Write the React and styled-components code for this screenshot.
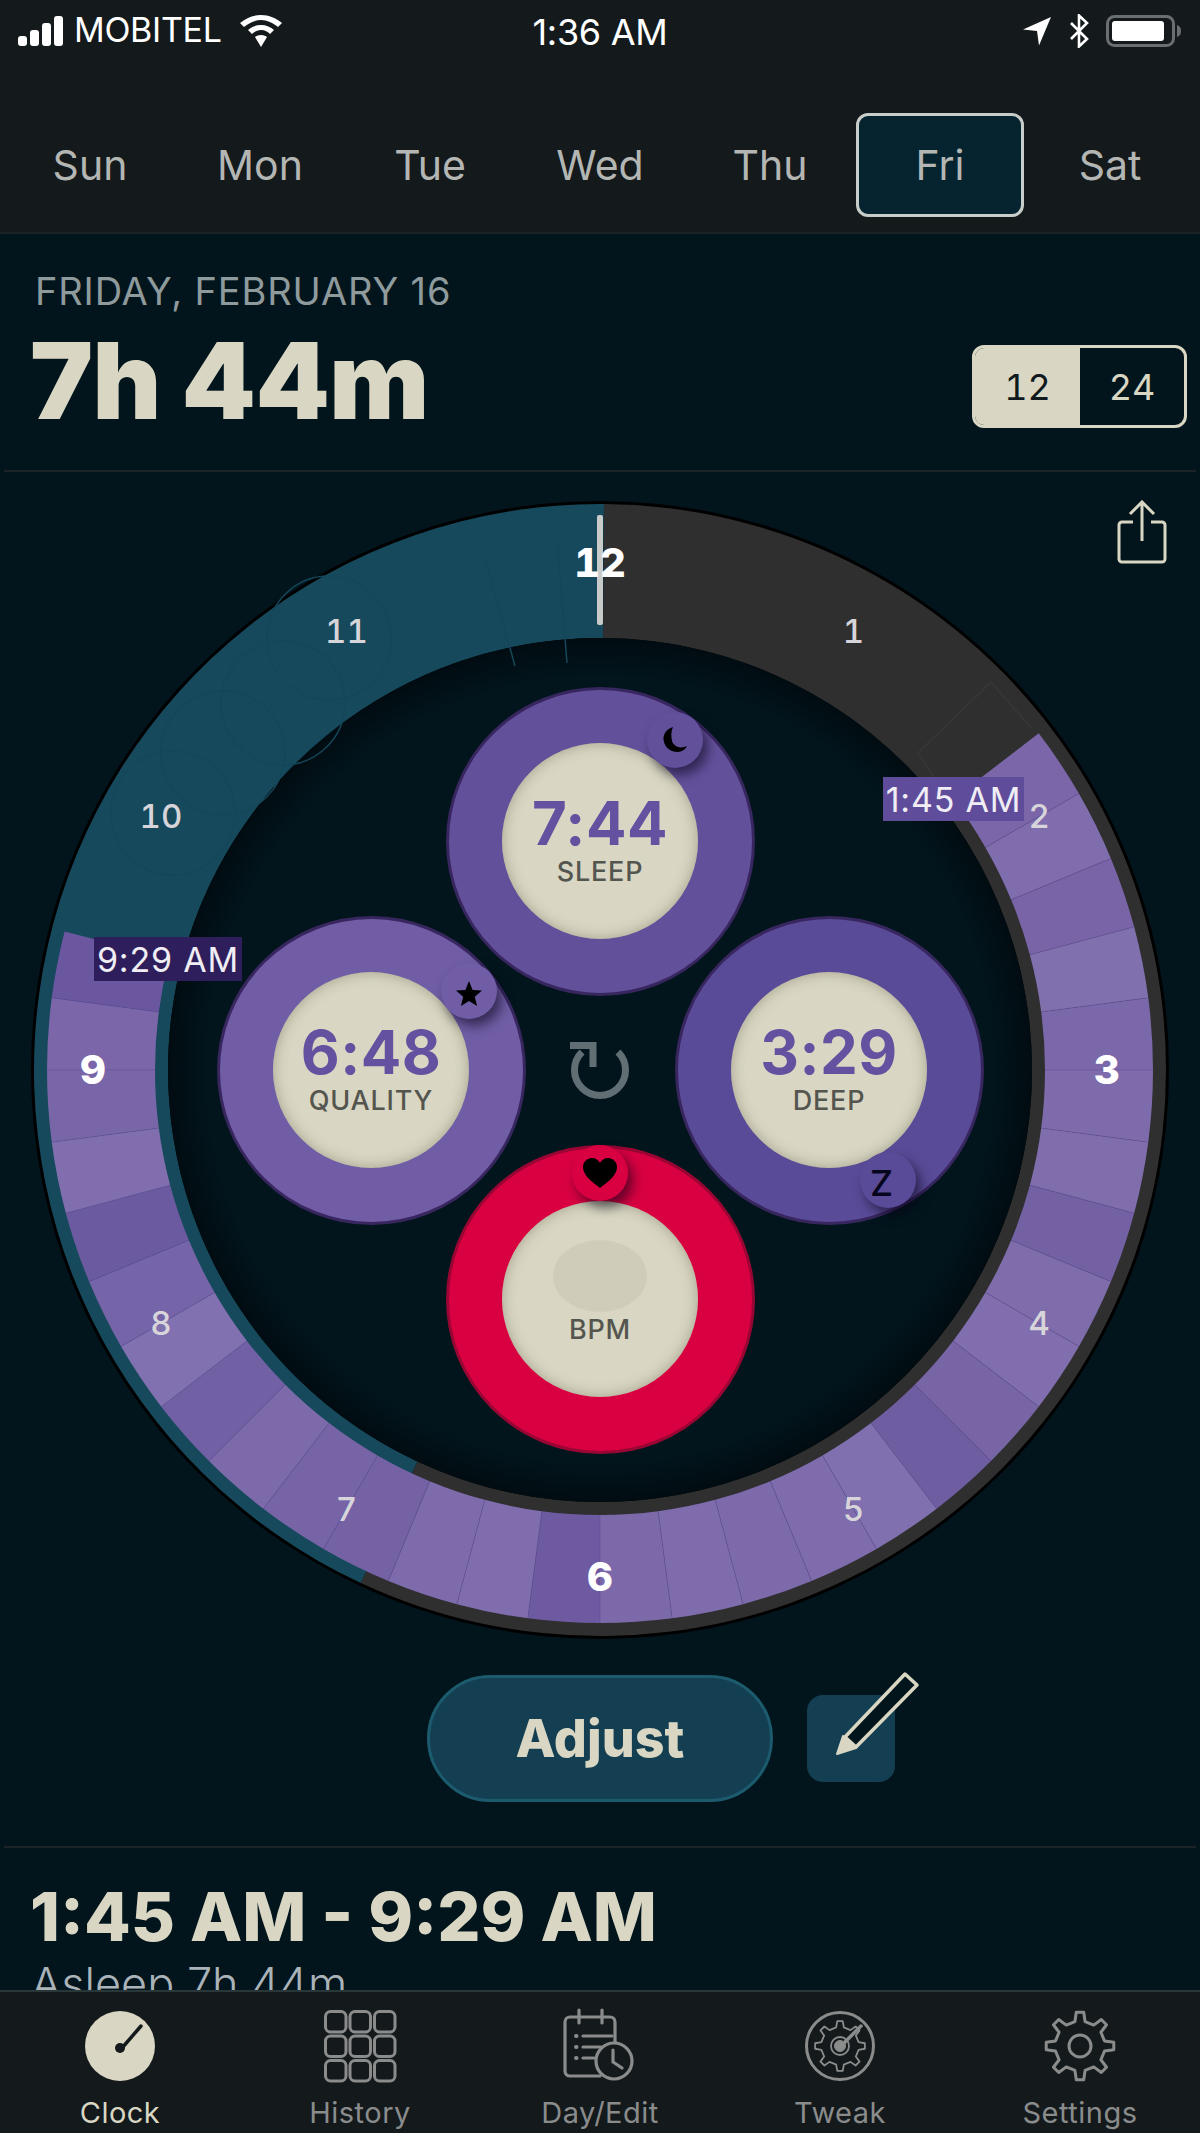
import React from 'react';
import styled, { createGlobalStyle } from 'styled-components';

const Global = createGlobalStyle`
  html, body { margin: 0; padding: 0; background: #02151d; }
  * { box-sizing: border-box; }
  #root { width: 1200px; height: 2133px; overflow: hidden; }
`;

const Page = styled.div`
  width: 1200px; height: 2133px; display: flex; flex-direction: column;
  background: #02151d; color: #d9d7c3; font-family: Inter, "Liberation Sans", sans-serif; overflow: hidden;
`;
const Header = styled.header`
  height: 234px; flex: none; background: #14191c; border-bottom: 2px solid #1b2224; display: flex; flex-direction: column;
`;
const StatusBar = styled.div`
  height: 66px; flex: none; padding: 0 18px; display: grid; grid-template-columns: 1fr auto 1fr; align-items: center; color: #fff;
`;
const StatusSide = styled.div`
  display: flex; align-items: center; gap: ${p => p.$gap}px; justify-content: ${p => p.$end ? 'flex-end' : 'flex-start'};
  margin-top: -4px;
`;
const StatusText = styled.span`
  font-size: ${p => p.$size}px; font-weight: 400; letter-spacing: -0.3px; line-height: 36px; margin-top: -2px;
`;
const WifiSlot = styled.span`display: flex; margin-left: 8px;`;
const DayNav = styled.nav`
  flex: 1; display: grid; grid-template-columns: repeat(7, 170px); justify-content: center; align-items: start; padding-top: 47px;
`;
const Day = styled.div`
  height: 104px; width: ${p => p.$active ? '168px' : 'auto'}; justify-self: center; display: flex; align-items: center; justify-content: center;
  font-size: 41px; font-weight: 400; color: #b3b6b3; border-radius: 12px;
  border: ${p => p.$active ? '3px solid #c9cdc9' : '3px solid transparent'};
  background: ${p => p.$active ? '#05242f' : 'transparent'};
`;
const Summary = styled.section`
  height: 238px; flex: none; padding: 36px 13px 0 30px; position: relative; display: flex; justify-content: space-between; align-items: flex-start;
  &::after { content: ''; position: absolute; left: 4px; right: 4px; bottom: 0; height: 2px; background: #1d2427; }
`;
const SummaryText = styled.div`display: flex; flex-direction: column;`;
const DateLine = styled.div`
  font-size: 38px; line-height: 42px; font-weight: 400; color: #8f9a9c; padding-left: 5px; letter-spacing: .85px; white-space: nowrap;
`;
const BigTotal = styled.div`
  font-size: 106px; line-height: 110px; font-weight: 900; letter-spacing: -.5px; margin-top: 14px; color: #d9d7c3; white-space: nowrap;
`;
const Toggle = styled.div`
  width: 215px; height: 83px; margin-top: 75px; border: 3px solid #d9d7c3; border-radius: 12px; display: grid; grid-template-columns: 105px 1fr; overflow: hidden;
`;
const ToggleItem = styled.div`
  display: flex; align-items: center; justify-content: center; font-size: 36px; font-weight: 400; font-feature-settings: 'tnum';
  background: ${p => p.$on ? '#d9d7c3' : 'transparent'}; color: ${p => p.$on ? '#10191c' : '#d9d7c3'};
`;
const ClockSection = styled.section`
  height: 1376px; flex: none; position: relative; display: flex; flex-direction: column; align-items: center; padding-top: 31px;
  &::after { content: ''; position: absolute; left: 4px; right: 4px; bottom: 0; height: 2px; background: #1d2427; }
`;
const ShareWrap = styled.div`position: absolute; top: 28px; right: 33px; width: 50px; height: 64px;`;
const Dial = styled.div`position: relative; width: 1134px; height: 1134px; flex: none;`;
const DialArt = styled.svg`display: block; width: 100%; height: 100%; overflow: visible;`;
const TimeTag = styled.div`
  position: absolute; left: ${p => p.$left}px; top: ${p => p.$top}px; width: ${p => p.$w}px; height: 44px;
  background: ${p => p.$bg}; color: #f0eef4; font-size: 34px; letter-spacing: .8px; display: flex; align-items: center; justify-content: center; white-space: nowrap;
`;
const DiscLayer = styled.div`
  position: absolute; inset: 0; display: grid; grid-template-columns: repeat(3, 229px); grid-template-rows: repeat(3, 229px);
  justify-content: center; align-content: center;
`;
const Disc = styled.div`
  grid-column: ${p => p.$col}; grid-row: ${p => p.$row}; place-self: center; width: 309px; height: 309px; flex: none; border-radius: 50%;
  position: relative; display: flex; align-items: center; justify-content: center;
  background: ${p => p.$color}; border: 3px solid ${p => p.$rim};
`;
const Face = styled.div`
  width: 196px; height: 196px; border-radius: 50%; background: #d9d7c3; display: flex; flex-direction: column; align-items: center;
  justify-content: ${p => p.$top ? 'flex-start' : 'center'}; padding-top: ${p => p.$top ? '39px' : '0'}; gap: ${p => p.$top ? '3px' : '6px'};
  box-shadow: inset 0 0 14px rgba(95, 92, 70, .45);
`;
const FaceTime = styled.div`
  font-size: 60px; line-height: 56px; font-weight: 700; color: #6452a0; letter-spacing: .5px;
`;
const FaceLabel = styled.div`
  font-size: 27px; line-height: 30px; font-weight: 500; color: #55554f; letter-spacing: .8px;
`;
const Blob = styled.div`width: 94px; height: 72px; border-radius: 50%; background: #cfcdba;`;
const Badge = styled.div`
  position: absolute; width: 56px; height: 56px; border-radius: 50%; background: ${p => p.$color};
  left: calc(50% + ${p => p.$dx}px - 28px); top: calc(50% + ${p => p.$dy}px - 28px);
  box-shadow: 5px 7px 12px rgba(5, 0, 20, .55); display: flex; align-items: center; justify-content: center; color: #05051c;
  font-size: 36px; font-weight: 500;
`;
const ZMark = styled.span`padding: 6px 13px 0 0;`;
const Centre = styled.div`grid-column: 2; grid-row: 2; place-self: center; width: 120px; height: 120px;`;
const Actions = styled.div`
  margin-top: 38px; margin-left: 122px; display: flex; align-items: center; gap: 34px; position: relative;
`;
const AdjustButton = styled.button`
  width: 346px; height: 127px; border-radius: 64px; background: #143f52; border: 3px solid #1c5a6e; color: #d9d7c3;
  font: 800 52px Inter, "Liberation Sans", sans-serif; display: flex; align-items: center; justify-content: center; padding: 0;
`;
const EditButton = styled.div`
  width: 88px; height: 87px; border-radius: 16px; background: #143f52; position: relative;
`;
const PencilWrap = styled.svg`position: absolute; left: -17px; top: -35px; width: 140px; height: 130px; overflow: visible;`;
const RangeSection = styled.section`
  flex: 1; min-height: 0; overflow: hidden; padding: 28px 30px 0;
`;
const RangeTitle = styled.div`
  font-size: 68px; line-height: 80px; font-weight: 800; letter-spacing: 0; color: #d9d7c3; white-space: nowrap;
`;
const RangeSub = styled.div`
  font-size: 45px; line-height: 50px; font-weight: 300; color: #aab3b8; padding-left: 1px; margin-top: 3px; white-space: nowrap;
`;
const TabBar = styled.nav`
  height: 143px; flex: none; background: #14191c; border-top: 2px solid #2a3739; display: grid; grid-template-columns: repeat(5, 240px);
`;
const Tab = styled.div`
  display: flex; flex-direction: column; align-items: center; padding-top: 16px; color: ${p => p.$on ? '#d9d7c3' : '#8a8c8c'};
`;
const TabIcon = styled.svg`width: 76px; height: 76px; display: block; flex: none;`;
const TabLabel = styled.div`font-size: 29px; line-height: 36px; margin-top: 11px; font-weight: 400; letter-spacing: .5px;`;

const C = 567;
const pt = (r, a) => {
  const t = (a - 90) * Math.PI / 180;
  return [C + r * Math.cos(t), C + r * Math.sin(t)];
};
const sector = (r1, r2, a1, a2) => {
  const large = a2 - a1 > 180 ? 1 : 0;
  const [x1, y1] = pt(r2, a1), [x2, y2] = pt(r2, a2), [x3, y3] = pt(r1, a2), [x4, y4] = pt(r1, a1);
  return `M${x1} ${y1}A${r2} ${r2} 0 ${large} 1 ${x2} ${y2}L${x3} ${y3}A${r1} ${r1} 0 ${large} 0 ${x4} ${y4}Z`;
};
const segColors = [
  '#7a66a8','#7f6dae','#7864a6','#8070ae','#7b68aa','#7e6bab','#7f6dac','#7361a4','#7e6cab','#806eae','#7765a6','#6f5da2',
  '#8070af','#7e6cad','#7c6aab','#7e6cac','#7c69aa','#6d5aa0','#7f6dae','#7e6bac','#7462a5','#7664a6','#7c6aaa','#7160a4',
  '#8271b0','#7664a8','#6c5aa0','#806eae','#7866a8','#7a66a9','#6b56a0',
];
const hours = [12, 1, 2, 3, 4, 5, 6, 7, 8, 9, 10, 11];
const gearPath = (cx, cy, ro, ri, n) => {
  const pts = [];
  const step = 360 / n;
  for (let i = 0; i < n; i++) {
    const a = i * step;
    [[-step * .26, ri], [-step * .14, ro], [step * .14, ro], [step * .26, ri]].forEach(([d, r]) => {
      const t = (a + d - 90) * Math.PI / 180;
      pts.push(`${(cx + r * Math.cos(t)).toFixed(2)} ${(cy + r * Math.sin(t)).toFixed(2)}`);
    });
  }
  return `M${pts.join('L')}Z`;
};

const Ring = () => {
  const segs = segColors.map((c, i) => {
    const a1 = 52.5 + i * 7.5;
    const a2 = Math.min(a1 + 7.5, 284.5);
    return <path key={i} d={sector(445, 553, a1, a2)} fill={c} />;
  });
  const seams = segColors.map((_, i) => {
    if (i === 0) return null;
    const a = 52.5 + i * 7.5;
    const [x1, y1] = pt(445, a), [x2, y2] = pt(553, a);
    return <line key={i} x1={x1} y1={y1} x2={x2} y2={y2} stroke="rgba(90,70,150,.4)" strokeWidth="1" />;
  });
  return (
    <DialArt viewBox="0 0 1134 1134">
      <defs>
        <radialGradient id="well" gradientUnits="userSpaceOnUse" cx={C} cy={C} r="433">
          <stop offset="0.9" stopColor="#02151d" />
          <stop offset="1" stopColor="#010c11" />
        </radialGradient>
      </defs>
      <circle cx={C} cy={C} r="569" fill="#000" />
      <path d={sector(432, 566, 0.4, 205)} fill="#2f2f2f" />
      <path d={sector(432, 566, 205, 360.4)} fill="#16495c" />
      <circle cx={C} cy={C} r="432" fill="url(#well)" />
      <g fill="none" stroke="#15475a" strokeWidth="1.5">
        <circle cx="296" cy="135" r="62" />
        <circle cx="250" cy="200" r="62" />
        <circle cx="190" cy="250" r="62" />
        <circle cx="140" cy="310" r="62" />
        <line x1="452" y1="55" x2="482" y2="163" />
        <line x1="524" y1="35" x2="534" y2="160" />
      </g>
      <path d="M958 179 L885 250 L900 273 M958 179 L999 226" fill="none" stroke="#363636" strokeWidth="2" />
      {segs}
      {seams}
      <rect x="564" y="12" width="6" height="110" rx="2" fill="#c9cbcb" />
      <g fontFamily="Inter, 'Liberation Sans', sans-serif" textAnchor="middle" style={{ fontFeatureSettings: "'tnum'" }}>
        {hours.map((h, i) => {
          const [x, y] = pt(507, i * 30);
          const major = h % 3 === 0;
          return (
            <text key={h} x={x} y={y} dy=".36em" fontSize={major ? 40 : 33} fontWeight={major ? 800 : 500} fill={major ? '#fff' : '#d7d5da'}>{h}</text>
          );
        })}
      </g>
    </DialArt>
  );
};

const Moon = () => (
  <svg width="34" height="34" viewBox="0 0 34 34"><path d="M15 4C8 6 4 12 6 19c2 8 11 12 18 9 2-1 4-3 5-5-6 3-13 1-15-5-1-5-1-10 1-14z" fill="#000" /></svg>
);
const Star = () => (
  <svg width="30" height="36" viewBox="0 -6 30 36"><path d="M15 2l3.6 8.9 9.4.7-7.2 6.1 2.3 9.3L15 22l-8.100 5 2.300-9.300L2 11.600l9.400-.7z" fill="#000" /></svg>
);
const Heart = () => (
  <svg width="38" height="34" viewBox="0 0 38 34"><path d="M19 32C8 24 2 18 2 11 2 6 6 2 11 2c3.500 0 6.500 2 8 5 1.500-3 4.500-5 8-5 5 0 9 4 9 9 0 7-6 13-17 21z" fill="#000" /></svg>
);

const Signal = () => (
  <svg width="46" height="30" viewBox="0 0 46 30">
    {[[0, 20, 10], [12, 14, 16], [24, 7, 23], [36, 0, 30]].map(([x, y, h]) => <rect key={x} x={x} y={y} width="9" height={h} rx="3" fill="#fff" />)}
  </svg>
);
const Wifi = () => (
  <svg width="42" height="32" viewBox="0 0 42 32" fill="#fff">
    <path d="M21 0C13 0 6 3 0 8l4 4c5-4 11-7 17-7s12 3 17 7l4-4C36 3 29 0 21 0z" />
    <path d="M21 10c-5 0-10 2-13 5l4 4c2-2 5-4 9-4s7 2 9 4l4-4c-3-3-8-5-13-5z" />
    <path d="M21 20c-3 0-5 1-6 2l6 10 6-10c-1-1-3-2-6-2z" />
  </svg>
);
const Locate = () => (
  <svg width="30" height="30" viewBox="0 0 30 30"><path d="M29 1L1 13.500l14 1.500 2 14.500z" fill="#fff" /></svg>
);
const Bluetooth = () => (
  <svg width="22" height="34" viewBox="0 0 22 34"><path d="M3 9l16 16-8 7.500V1.500l8 7.500L3 25" fill="none" stroke="#fff" strokeWidth="2.600" /></svg>
);
const Battery = () => (
  <svg width="76" height="32" viewBox="0 0 76 32">
    <rect x="1.500" y="1.500" width="66" height="29" rx="7" fill="none" stroke="#6a6e70" strokeWidth="3" />
    <rect x="6" y="6" width="52" height="20" rx="3" fill="#fff" />
    <path d="M71 10c3 1 4 3 4 6s-1 5-4 6z" fill="#6a6e70" />
  </svg>
);

const Tabs = [
  ['Clock', true, (
    <>
      <circle cx="38" cy="38" r="35" fill="#d9d7c3" />
      <path d="M59 18L40 40" stroke="#14191c" strokeWidth="3.500" strokeLinecap="round" />
      <circle cx="38" cy="40" r="5" fill="#14191c" />
    </>
  )],
  ['History', false, (
    <g fill="none" stroke="currentColor" strokeWidth="3">
      {[0, 1, 2].flatMap(r => [0, 1, 2].map(c => (
        <rect key={`${r}${c}`} x={3.500 + c * 24.500} y={3.500 + r * 24.500} width="20.500" height="20.500" rx="5" />
      )))}
    </g>
  )],
  ['Day/Edit', false, (
    <g fill="none" stroke="currentColor" strokeWidth="3.200" strokeLinecap="round" transform="translate(-6 0)">
      <path d="M44 68H14a5 5 0 0 1-5-5V14a5 5 0 0 1 5-5h40a5 5 0 0 1 5 5v28" />
      <path d="M23 2v13M46 2v13M27 28h29M27 39h18M27 50h11" />
      <path d="M20 28h.5M20 39h.5M20 50h.5" strokeWidth="4" />
      <circle cx="58" cy="53" r="18" fill="#14191c" />
      <path d="M57 42v12l9 6" />
    </g>
  )],
  ['Tweak', false, (
    <g fill="none" stroke="currentColor">
      <circle cx="38" cy="38" r="33.500" strokeWidth="3" />
      <path d={gearPath(38, 38, 25, 19, 8)} strokeWidth="1.800" strokeLinejoin="round" />
      <circle cx="38" cy="38" r="9" strokeWidth="1.800" />
      <circle cx="38" cy="38" r="5.500" fill="currentColor" />
      <path d="M59 18L40 37" strokeWidth="3.500" strokeLinecap="round" />
    </g>
  )],
  ['Settings', false, (
    <g fill="none" stroke="currentColor" strokeWidth="3" strokeLinejoin="round">
      <path d={gearPath(38, 38, 34, 25, 8)} />
      <circle cx="38" cy="38" r="11" />
    </g>
  )],
];

export default function App() {
  return (
    <Page>
      <Global />
      <Header>
        <StatusBar>
          <StatusSide $gap={10}>
            <Signal />
            <StatusText $size={34}>MOBITEL</StatusText>
            <WifiSlot><Wifi /></WifiSlot>
          </StatusSide>
          <StatusText $size={36}>1:36 AM</StatusText>
          <StatusSide $end $gap={16}>
            <Locate />
            <Bluetooth />
            <Battery />
          </StatusSide>
        </StatusBar>
        <DayNav>
          {['Sun', 'Mon', 'Tue', 'Wed', 'Thu', 'Fri', 'Sat'].map(d => <Day key={d} $active={d === 'Fri'}>{d}</Day>)}
        </DayNav>
      </Header>
      <Summary>
        <SummaryText>
          <DateLine>FRIDAY, FEBRUARY 16</DateLine>
          <BigTotal>7h 44m</BigTotal>
        </SummaryText>
        <Toggle>
          <ToggleItem $on>12</ToggleItem>
          <ToggleItem>24</ToggleItem>
        </Toggle>
      </Summary>
      <ClockSection>
        <ShareWrap>
          <svg width="50" height="64" viewBox="0 0 50 64" fill="none" stroke="#d9d7c3" strokeWidth="3">
            <path d="M16 22H5a3 3 0 0 0-3 3v34a3 3 0 0 0 3 3h40a3 3 0 0 0 3-3V25a3 3 0 0 0-3-3H34" />
            <path d="M25 41V3M13 14L25 2l12 12" />
          </svg>
        </ShareWrap>
        <Dial>
          <Ring />
          <DiscLayer>
            <Disc $col={2} $row={1} $color="#63509b" $rim="#38265f">
              <Face>
                <FaceTime>7:44</FaceTime>
                <FaceLabel>SLEEP</FaceLabel>
              </Face>
              <Badge $color="#63509b" $dx={75} $dy={-101}><Moon /></Badge>
            </Disc>
            <Disc $col={1} $row={2} $color="#705da5" $rim="#38265f">
              <Face>
                <FaceTime>6:48</FaceTime>
                <FaceLabel>QUALITY</FaceLabel>
              </Face>
              <Badge $color="#705da5" $dx={98} $dy={-79}><Star /></Badge>
            </Disc>
            <Centre>
              <svg width="120" height="120" viewBox="0 0 120 120" fill="none" stroke="#616f74" strokeWidth="7">
                <path d="M78 42A25.500 25.500 0 1 1 42 42" />
                <path d="M30 35.500H53V57" />
              </svg>
            </Centre>
            <Disc $col={3} $row={2} $color="#5a4b98" $rim="#38265f">
              <Face>
                <FaceTime>3:29</FaceTime>
                <FaceLabel>DEEP</FaceLabel>
              </Face>
              <Badge $color="#5a4b98" $dx={59} $dy={110}><ZMark>Z</ZMark></Badge>
            </Disc>
            <Disc $col={2} $row={3} $color="#d90042" $rim="#9a0634">
              <Face $top>
                <Blob />
                <FaceLabel>BPM</FaceLabel>
              </Face>
              <Badge $color="#d90042" $dx={0} $dy={-126}><Heart /></Badge>
            </Disc>
          </DiscLayer>
          <TimeTag $left={61} $top={434} $w={148} $bg="#2e1f5c">9:29 AM</TimeTag>
          <TimeTag $left={850} $top={274} $w={141} $bg="#5f4d9c">1:45 AM</TimeTag>
        </Dial>
        <Actions>
          <AdjustButton>Adjust</AdjustButton>
          <EditButton>
            <PencilWrap viewBox="0 0 140 130">
              <path d="M47 94L53 76L66 88Z" fill="#d9d7c3" stroke="#d9d7c3" strokeWidth="2" strokeLinejoin="round" />
              <path d="M55 77L115 14L127 25L66 87Z" fill="#02151d" stroke="#d9d7c3" strokeWidth="3.500" strokeLinejoin="round" />
            </PencilWrap>
          </EditButton>
        </Actions>
      </ClockSection>
      <RangeSection>
        <RangeTitle>1:45 AM - 9:29 AM</RangeTitle>
        <RangeSub>Asleep 7h 44m</RangeSub>
      </RangeSection>
      <TabBar>
        {Tabs.map(([label, on, art]) => (
          <Tab key={label} $on={on}>
            <TabIcon viewBox="0 0 76 76">{art}</TabIcon>
            <TabLabel>{label}</TabLabel>
          </Tab>
        ))}
      </TabBar>
    </Page>
  );
}
